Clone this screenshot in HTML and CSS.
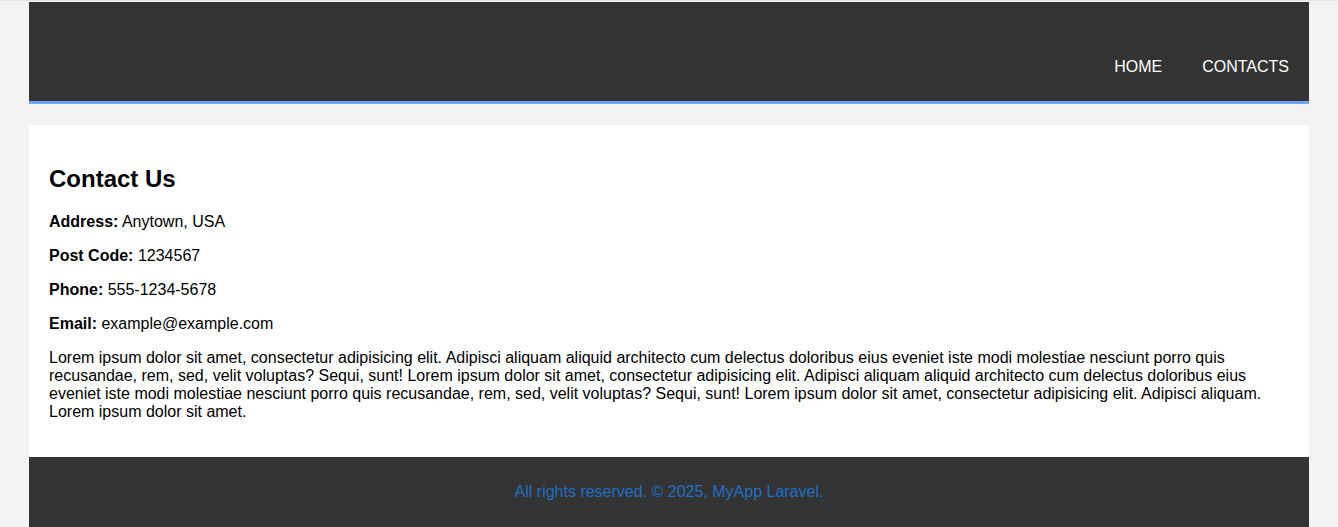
FILE: index.html
```html
<!DOCTYPE html>
<html lang="en">
<head>
<meta charset="utf-8">
<title>Contacts</title>
<link rel="stylesheet" href="styles.css">
</head>
<body>
<div class="page">
  <header class="site-header">
    <nav class="nav">
      <a href="#" class="nav-link">HOME</a>
      <a href="#" class="nav-link">CONTACTS</a>
    </nav>
  </header>
  <main class="content">
    <h2 class="title">Contact Us</h2>
    <p><strong>Address:</strong> Anytown, USA</p>
    <p><strong>Post Code:</strong> 1234567</p>
    <p><strong>Phone:</strong> 555-1234-5678</p>
    <p><strong>Email:</strong> example@example.com</p>
    <p>Lorem ipsum dolor sit amet, consectetur adipisicing elit. Adipisci aliquam aliquid architecto cum delectus doloribus eius eveniet iste modi molestiae nesciunt porro quis recusandae, rem, sed, velit voluptas? Sequi, sunt! Lorem ipsum dolor sit amet, consectetur adipisicing elit. Adipisci aliquam aliquid architecto cum delectus doloribus eius eveniet iste modi molestiae nesciunt porro quis recusandae, rem, sed, velit voluptas? Sequi, sunt! Lorem ipsum dolor sit amet, consectetur adipisicing elit. Adipisci aliquam. Lorem ipsum dolor sit amet.</p>
  </main>
  <footer class="site-footer">
    <p class="copy">All rights reserved. © 2025, MyApp Laravel.</p>
  </footer>
</div>
</body>
</html>
```
FILE: styles.css
```css
html, body {
  margin: 0;
  padding: 0;
}
body {
  background: #f3f3f3;
  font-family: "Liberation Sans", Arial, sans-serif;
  font-size: 16px;
  color: #000;
  border-top: 1px solid #e4e4e4;
  padding-top: 1px;
}
.page {
  width: 1280px;
  margin: 0 auto;
}
.site-header {
  background: #333;
  height: 99px;
  border-bottom: 3px solid #6fa3f7;
  display: flex;
  justify-content: flex-end;
  align-items: flex-start;
}
.nav {
  display: flex;
  padding-top: 56px;
}
.nav-link {
  color: #fff;
  text-decoration: none;
  padding: 0 20px;
  line-height: 18px;
}
.content {
  background: #fff;
  margin-top: 21px;
  padding: 20px;
  overflow: hidden;
}
.title {
  font-size: 24px;
  margin: 20px 0;
}
.content p {
  margin: 16px 0;
  line-height: 18px;
}
.site-footer {
  background: #333;
  padding: 26px 20px 30px;
  text-align: center;
}
.copy {
  margin: 0;
  color: #1f6fc4;
  line-height: 18px;
}
```
